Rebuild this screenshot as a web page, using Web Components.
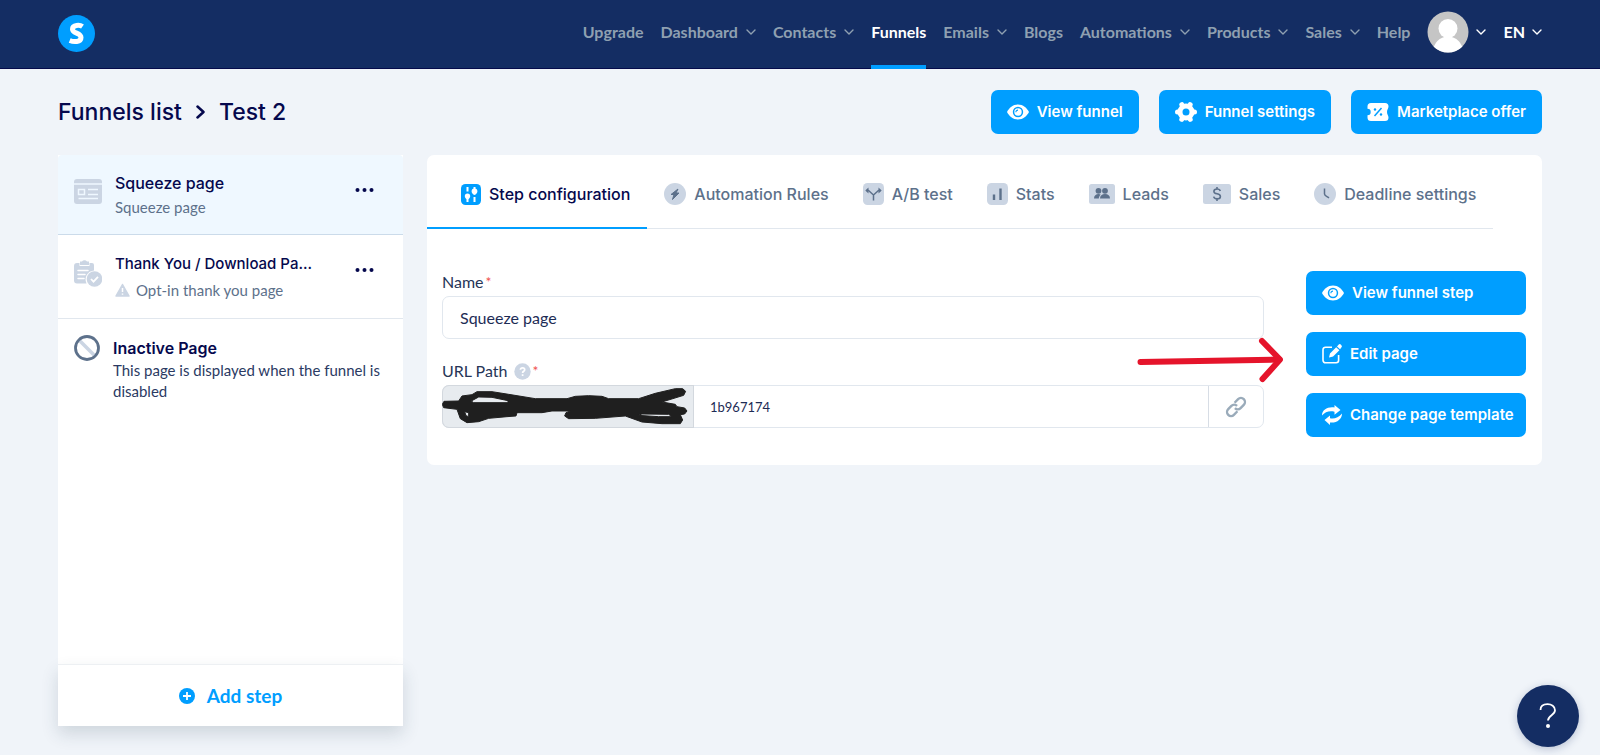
<!DOCTYPE html>
<html lang="en">
<head>
<meta charset="utf-8">
<title>Test 2 – Funnel steps</title>
<style>
  :root {
    --navy: #142d63;
    --ink: #05084d;
    --blue: #009eff;
    --slate: #5d718b;
    --icon: #cbd5e3;
    --line: #e1e7ee;
    --page: #f0f4f9;
    --body-font: Lato, "Open Sans", sans-serif;
    --title-font: Inter, "Noto Sans", sans-serif;
  }
  body { margin: 0; background: var(--page); color: var(--ink); font-family: var(--body-font); }
</style>
</head>
<body>
<funnel-app></funnel-app>
<script>
const ICONS = {
  logo: [37, 37, `<circle cx="18.5" cy="18.5" r="18.5" fill="#009eff"/><path d="M24.500 11.500C22 9.800 14.500 9.500 14.500 14.200C14.500 18.800 23 17.500 23 22.500C23 27.500 15.500 27 11.700 25.500" fill="none" stroke="#fff" stroke-width="5"/>`],
  chevron: [10, 6, `<path d="M1 1l4 4 4-4" fill="none" stroke="currentColor" stroke-width="1.4" stroke-linecap="round" stroke-linejoin="round"/>`],
  crumb: [9, 14, `<path d="M1.500 1.500l6 5.500-6 5.500" fill="none" stroke="currentColor" stroke-width="2.500" stroke-linecap="round" stroke-linejoin="round"/>`],
  avatar: [42, 42, `<clipPath id="c"><circle cx="21" cy="21" r="20.500"/></clipPath><g clip-path="url(#c)"><path fill="#c5c5c5" d="M0 0h42v42H0z"/><circle cx="21" cy="17.500" r="9.500" fill="#fff"/><ellipse cx="21" cy="41" rx="15" ry="15.500" fill="#fff"/></g>`],
  eye: [22, 16, `<path fill="currentColor" fill-rule="evenodd" d="M11 .5C16 .5 20 4 22 8c-2 4-6 7.500-11 7.500S2 12 0 8C2 4 6 .5 11 .5zM11 2.800a5.200 5.200 0 1 0 0 10.400 5.200 5.200 0 0 0 0-10.400z"/><circle cx="11" cy="8" r="3.700" fill="currentColor"/><path d="M8.900 8.200a2.100 2.100 0 0 1 2.100-2.100" fill="none" stroke="#009eff" stroke-width="1.100"/>`],
  gear: [22, 22, `<circle cx="11" cy="11" r="6" fill="none" stroke="currentColor" stroke-width="5"/><path d="M2.500 11H4M18 11h1.500M6.800 3.600l.7 1.300M14.500 17.100l.7 1.300M15.200 3.600l-.7 1.300M7.500 17.100l-.7 1.300" stroke="currentColor" stroke-width="5" stroke-linecap="round"/>`],
  ticket: [22, 18, `<path fill="currentColor" d="M4 0h14a3.500 3.500 0 0 1 3.500 3.500c0 2-1.500 3-1.500 5.500s1.500 3.500 1.500 5.500A3.500 3.500 0 0 1 18 18H4a3.500 3.500 0 0 1-3.500-3.500v-2.300a3.200 3.200 0 0 0 0-6.400V3.500A3.500 3.500 0 0 1 4 0z"/><path d="M7.500 13l7-8" stroke="#009eff" stroke-width="1.500"/><circle cx="8" cy="6.500" r="1.200" fill="#009eff"/><circle cx="14" cy="11.500" r="1.200" fill="#009eff"/>`],
  edit: [20, 20, `<path d="M10 3.200H3.500A2.500 2.500 0 0 0 1 5.700v10.600A2.500 2.500 0 0 0 3.500 18.800h10.600a2.500 2.500 0 0 0 2.500-2.500V11" fill="none" stroke="currentColor" stroke-width="1.600"/><path fill="currentColor" d="M7 13.500l1-4 6.200-6.300 3.200 3.100-6.300 6.200zM15 2.400L16.500.8a1.700 1.700 0 0 1 2.500 0l.3.400a1.700 1.700 0 0 1 0 2.400l-1.200 1.600z"/>`],
  refresh: [20, 20, `<path fill="currentColor" d="M0 10.500C0 4.500 6 1.500 12.500 2.500V0l6 5-6 4.800V6.800C7.500 5.500 3 7 0 10.500zM20 8.500c0 6-5.500 9.800-12 9V20l-5.500-5L8 10.500v2.800c4.500 1 8.500-.8 12-4.800z"/>`],
  page: [28, 25, `<rect width="28" height="25" rx="3" fill="#cbd5e3"/><path d="M0 5h28M4.500 10.500h6v5h-6zM14 10.500h10M14 15.500h10M4.500 19.500H24" fill="none" stroke="#eff8ff" stroke-width="1.500"/>`],
  clipboard: [28, 28, `<path fill="#cbd5e3" d="M3 4h2.500v3h10V4H18a2 2 0 0 1 2 2v5.500a9 9 0 0 0-7.500 13H3a3 3 0 0 1-3-3V7a3 3 0 0 1 3-3z"/><path fill="#cbd5e3" d="M6 2.500h2a3 3 0 0 1 5 0h2V6H6z"/><path d="M4 11.500h10M4 15.500h7M4 19.500h6" stroke="#fff" stroke-width="1.500" stroke-linecap="round"/><circle cx="20.500" cy="20" r="7.800" fill="#cbd5e3"/><path d="M17 20l2.500 2.600 4.500-4.800" fill="none" stroke="#fff" stroke-width="1.800"/>`],
  banned: [26, 26, `<path d="M5 5l16 16" stroke="#cbd5e3" stroke-width="3.500"/><circle cx="13" cy="13" r="11.500" fill="none" stroke="#5d718b" stroke-width="2.800"/>`],
  warn: [15, 14, `<path fill="#cbd5e3" stroke="#cbd5e3" stroke-width="1.500" stroke-linejoin="round" d="M7.500 1.500L14 13H1z"/><path d="M7.500 5v4M7.500 10.500v1.300" stroke="#fff" stroke-width="1.500"/>`],
  dots: [19, 6, `<g fill="currentColor"><circle cx="2.500" cy="3" r="2"/><circle cx="9.500" cy="3" r="2"/><circle cx="16.500" cy="3" r="2"/></g>`],
  plus: [16, 16, `<circle cx="8" cy="8" r="8" fill="currentColor"/><path d="M8 4v8M4 8h8" stroke="#fff" stroke-width="1.800"/>`],
  config: [20, 21, `<rect width="20" height="21" rx="4.500" fill="#009eff"/><path d="M6.500 3v4.500M6.500 13v5M13.500 3v5M13.500 13v5" stroke="#fff" stroke-width="2"/><path fill="#fff" d="M6.500 9.500a2.700 2.700 0 0 1 2.700 2.700c0 1.500-1.200 2.500-2.700 3.300-1.500-.8-2.700-1.800-2.700-3.300a2.700 2.700 0 0 1 2.700-2.700zM13.500 4.500a2.900 2.900 0 0 1 2.900 3c0 1.600-1.300 2.800-2.900 3.500-1.600-.7-2.900-1.900-2.900-3.500a2.900 2.900 0 0 1 2.900-3z"/>`],
  bolt: [22, 22, `<circle cx="11" cy="11" r="11" fill="#cbd5e3"/><path fill="#5d718b" stroke="#5d718b" stroke-linejoin="round" d="M14 6l-7 5.500h3l-1.500 5 6.500-6.500h-3z"/>`],
  split: [21, 22, `<rect width="21" height="22" rx="4.500" fill="#cbd5e3"/><path d="M10.500 17.500V12L5.500 7.500H3.500M10.500 12l5-4.500h2" fill="none" stroke="#5d718b" stroke-width="1.500"/><path fill="#5d718b" d="M5.500 4.500v6L2.300 7.500zM15.500 4.500v6l3.200-3z"/>`],
  stats: [21, 22, `<rect width="21" height="22" rx="4.500" fill="#cbd5e3"/><path d="M7 11.500V17M13.500 5.500V17" stroke="#5d718b" stroke-width="2.400"/>`],
  leads: [26, 20, `<rect width="26" height="20" rx="2.500" fill="#cbd5e3"/><g fill="#5d718b"><circle cx="9.500" cy="6.800" r="2.900"/><circle cx="16" cy="6.800" r="2.900"/><path d="M5 14.500c0-3 2-4.500 4.500-4.500 1 0 1.800.3 2.200.7-1.200 1-1.800 2.200-1.900 3.800zM11 14.500c0-3 2-4.500 5-4.500s5 1.500 5 4.500z"/></g>`],
  money: [28, 20, `<rect width="28" height="20" rx="2.500" fill="#cbd5e3"/><path d="M17.300 7c-.4-1.400-1.600-2-3.200-2-1.900 0-3.200.9-3.200 2.400 0 3.200 6.500 1.700 6.500 5 0 1.500-1.300 2.400-3.300 2.400-1.800 0-3.100-.8-3.400-2.200M14 3v2M14 15v2" fill="none" stroke="#5d718b" stroke-width="1.600"/>`],
  clock: [22, 22, `<circle cx="11" cy="11" r="11" fill="#cbd5e3"/><path d="M10.500 5.500V11c0 1.500 2 2.300 4.500 4" fill="none" stroke="#5d718b" stroke-width="1.500"/>`],
  help: [17, 17, `<circle cx="8.500" cy="8.500" r="8.200" fill="#cbd5e3"/><path d="M6.400 6.800c.2-2.600 4.300-2.500 4.300-.1 0 1.600-2.100 1.500-2.100 3.200M8.600 11.200v1.700" fill="none" stroke="#fff" stroke-width="1.700"/>`],
  link: [22, 22, `<g transform="rotate(-45 11 11)" fill="none" stroke="#9aabba" stroke-width="2.400"><path d="M9 15H4a4 4 0 0 1 0-8h4.500a4 4 0 0 1 4 4"/><path d="M13 7h5a4 4 0 0 1 0 8h-4.500a4 4 0 0 1-4-4"/></g>`],
  question: [18, 26, `<path d="M1.500 7C1.500 3 4.500 1.200 8.500 1.200S16 3.500 16 7.200c0 5-7 5-7 10.300" fill="none" stroke="#fff" stroke-width="1.800"/><circle cx="9" cy="23" r="2" fill="#fff"/>`],
  scribble: [248, 42, `<path transform="scale(.3333)" fill="#1f1f1f" stroke="#1f1f1f" stroke-width="3" stroke-linejoin="round" fill-rule="evenodd" d="M1 55L6 46 50 45 60 30 90 26 105 17 150 17 200 25 280 38H375L400 31 440 29 480 31 500 38H590L640 22 700 8H722L731 16 725 28 660 48 700 55 705 62 728 66 735 75 728 84 715 86 722 102 715 113H660L600 108 550 90 460 97 380 98 368 90 372 80 385 75H330L300 80 225 80 222 90 195 92 140 97 110 107 75 110 55 98 45 70 5 65zM68 77L80 80 80 92 72 89zM88 45L110 33 150 34 198 44V50H95zM588 88L600 84 680 85 690 92H650z"/>`],
  arrow: [146, 46, `<g fill="none" stroke="#e5142b" stroke-linecap="round" stroke-linejoin="round"><path stroke-width="6" d="M3.500 25L142 22.500"/><path stroke-width="6" d="M125 4l18 18.500L125.500 42"/></g>`]
};

/* Registers an element whose shadow root is cloned from a template; markup may depend on attributes. */
function define(tag, css, markup) {
  customElements.define(tag, class extends HTMLElement {
    connectedCallback() {
      if (this.shadowRoot) return;
      const t = document.createElement('template');
      t.innerHTML = `<style>*{box-sizing:border-box}${css}</style>` + (typeof markup === 'function' ? markup(this) : markup);
      this.attachShadow({ mode: 'open' }).append(t.content.cloneNode(true));
    }
  });
}
const attr = (el, name, fallback = '') => el.getAttribute(name) || fallback;

define('ui-icon', `:host{display:block;flex:none}svg{display:block}`, el => {
  const [w, h, body] = ICONS[attr(el, 'name')];
  return `<svg width="${w}" height="${h}" viewBox="0 0 ${w} ${h}" aria-hidden="true">${body}</svg>`;
});

define('nav-item', `
  :host{display:flex;height:100%;color:#8fa0b1}
  :host([active]),:host([bright]){color:#fff}
  a{display:flex;align-items:center;gap:8px;padding-bottom:6px;color:inherit;font-weight:700;font-size:16px;line-height:20px;text-decoration:none}
  :host([bright]) a{gap:7px}
  :host([active]) a{box-shadow:inset 0 -4px var(--blue)}`,
  el => `<a href="#"><slot></slot>${el.hasAttribute('menu') ? '<ui-icon name="chevron"></ui-icon>' : ''}</a>`);

define('app-header', `
  :host{display:flex;align-items:center;justify-content:space-between;height:69px;padding:0 58px;background:var(--navy);box-shadow:inset 0 -1px #050b4b}
  .logo{padding-bottom:3px}
  nav{display:flex;gap:17px;height:100%}`,
  `<a class="logo" href="#" aria-label="Home"><ui-icon name="logo"></ui-icon></a>
  <nav><nav-item>Upgrade</nav-item><nav-item menu>Dashboard</nav-item><nav-item menu>Contacts</nav-item><nav-item active>Funnels</nav-item><nav-item menu>Emails</nav-item><nav-item>Blogs</nav-item><nav-item menu>Automations</nav-item><nav-item menu>Products</nav-item><nav-item menu>Sales</nav-item><nav-item>Help</nav-item><nav-item menu bright><ui-icon name="avatar"></ui-icon></nav-item><nav-item menu bright>EN</nav-item></nav>`);

define('action-button', `
  :host{display:block}
  button{display:flex;align-items:center;gap:8px;width:100%;height:44px;padding:0 16px;border:0;border-radius:7px;background:var(--blue);color:#fff;font:600 15px/20px var(--title-font);white-space:nowrap}`,
  el => `<button type="button"><ui-icon name="${attr(el, 'icon')}"></ui-icon><slot></slot></button>`);

define('page-heading', `
  :host{display:flex;align-items:center;justify-content:space-between}
  .crumbs{display:flex;align-items:center;gap:14px;font:500 23px/30px var(--title-font)}
  a{color:inherit;text-decoration:none}
  h1{margin:0;font:inherit}
  .actions{display:flex;gap:20px}`,
  `<div class="crumbs"><a href="#">Funnels list</a><ui-icon name="crumb"></ui-icon><h1>Test 2</h1></div>
  <div class="actions"><action-button icon="eye">View funnel</action-button><action-button icon="gear">Funnel settings</action-button><action-button icon="ticket">Marketplace offer</action-button></div>`);

define('step-item', `
  :host{display:flex;align-items:flex-start;gap:13px;padding:24px 29px 0 16px;height:84px;border-bottom:1px solid var(--line)}
  :host([active]){height:80px;padding-top:18px;background:#eff8ff;border-color:#cbdbea;border-radius:4px 4px 0 0}
  :host([inactive]){padding:16px 0 0 16px;border:0;height:auto}
  :host([active]) .mark{padding-top:6px}
  .text{flex:1;min-width:0}
  ::slotted([slot=title]){display:block;font:500 15px/20px var(--title-font);margin-top:-5px;white-space:nowrap}
  :host([active]) ::slotted([slot=title]){font-size:16px;margin-top:0}
  :host([inactive]) ::slotted([slot=title]){font:600 16px/24px var(--title-font);margin-top:1px}
  .sub{display:flex;align-items:center;gap:6px;margin-top:6px;font-size:15px;line-height:20px;color:var(--slate)}
  :host([active]) .sub{margin-top:4px}
  :host([inactive]) .sub{margin:0;line-height:21px;color:#2b3a63}
  button{border:0;background:none;padding:8px 0;color:var(--ink)}
  :host([active]) button{padding-top:14px}`,
  el => `<ui-icon class="mark" name="${attr(el, 'icon')}"></ui-icon><div class="text"><slot name="title"></slot><div class="sub">${el.hasAttribute('warn') ? '<ui-icon name="warn"></ui-icon>' : ''}<slot></slot></div></div>${el.hasAttribute('inactive') ? '' : '<button type="button" aria-label="Step options"><ui-icon name="dots"></ui-icon></button>'}`);

define('step-list', `
  :host{display:flex;flex-direction:column;background:#fff}
  .add{display:flex;align-items:center;justify-content:center;gap:12px;height:62px;margin-top:auto;border:0;border-top:1px solid #edf0f3;background:#fff;color:var(--blue);font:700 19px/24px var(--body-font);box-shadow:0 8px 16px rgba(40,60,80,.16)}`,
  `<step-item active icon="page"><span slot="title">Squeeze page</span>Squeeze page</step-item>
  <step-item warn icon="clipboard"><span slot="title">Thank You / Download Pa...</span>Opt-in thank you page</step-item>
  <step-item inactive icon="banned"><span slot="title">Inactive Page</span>This page is displayed when the funnel is disabled</step-item>
  <button class="add" type="button"><ui-icon name="plus"></ui-icon>Add step</button>`);

define('tab-item', `
  :host{display:block;color:var(--slate)}
  :host([active]){color:var(--ink)}
  a{display:flex;align-items:center;gap:8px;height:74px;padding:4px 17px 0;color:inherit;text-decoration:none;font:500 16px/24px var(--title-font);white-space:nowrap}
  :host([active]) a{padding-left:34px;box-shadow:inset 0 -2px var(--blue)}`,
  el => `<a href="#"><ui-icon name="${attr(el, 'icon')}"></ui-icon><slot></slot></a>`);

define('step-form', `
  :host{display:block}
  label,.label{display:flex;align-items:center;gap:6px;height:24px;font-size:16px;line-height:20px;color:#263557}
  label,.label{padding-bottom:4px}
  .label label{padding:0}
  .req{align-self:flex-start;color:#ef5350;font-size:14px;line-height:20px;margin-left:-4px}
  input{min-width:0;width:100%;height:43px;padding:0 17px;border:1px solid var(--line);border-radius:7px;background:#fff;color:#1d2c55;font:16px/20px var(--body-font);outline:0}
  .group{display:flex;height:43px;border:1px solid var(--line);border-radius:7px}
  .prefix{position:relative;flex:none;width:250px;border-radius:6px 0 0 6px;background:#e7ebef;box-shadow:0 0 0 1px #d3d8de}
  .prefix ui-icon{position:absolute;left:-1px;top:0}
  .group input{flex:1;height:100%;border:0;font-size:13px}
  .group button{display:grid;place-items:center;width:55px;flex:none;border:0;border-left:1px solid #d7dde5;background:none;padding:0}
  .name{margin-bottom:22px}`,
  `<div class="name"><label for="name">Name<span class="req">*</span></label><input id="name" value="Squeeze page"></div>
  <div><div class="label"><label for="path">URL Path</label><ui-icon name="help"></ui-icon><span class="req">*</span></div>
  <div class="group"><div class="prefix"><ui-icon name="scribble"></ui-icon></div><input id="path" value="1b967174"><button type="button" aria-label="Copy link"><ui-icon name="link"></ui-icon></button></div></div>`);

define('step-panel', `
  :host{display:block;background:#fff;border-radius:7px;padding-bottom:28px}
  .tabs{display:flex;width:fit-content;box-shadow:inset 0 -1px var(--line)}
  .body{display:flex;gap:42px;padding:42px 16px 0 15px}
  step-form{flex:1;margin-top:1px}
  .side{position:relative;width:220px;display:grid;grid-template-columns:minmax(0,1fr);gap:17px;align-content:start}
  .arrow{position:absolute;right:calc(100% + 23px);top:66px}`,
  `<div class="tabs"><tab-item active icon="config">Step configuration</tab-item><tab-item icon="bolt">Automation Rules</tab-item><tab-item icon="split">A/B test</tab-item><tab-item icon="stats">Stats</tab-item><tab-item icon="leads">Leads</tab-item><tab-item icon="money">Sales</tab-item><tab-item icon="clock">Deadline settings</tab-item></div>
  <div class="body"><step-form></step-form><div class="side"><action-button icon="eye">View funnel step</action-button><action-button icon="edit">Edit page</action-button><action-button icon="refresh">Change page template</action-button><ui-icon class="arrow" name="arrow"></ui-icon></div></div>`);

define('help-button', `
  :host{position:fixed;right:21px;bottom:8px}
  button{display:grid;place-items:center;width:62px;height:62px;border:0;border-radius:50%;background:var(--navy);box-shadow:0 2px 8px rgba(20,45,99,.25)}`,
  `<button type="button" aria-label="Help"><ui-icon name="question"></ui-icon></button>`);

define('funnel-app', `
  :host{display:flex;flex-direction:column;min-height:100vh}
  main{flex:1;display:flex;flex-direction:column;gap:21px;padding:21px 58px 29px}
  .columns{flex:1;display:grid;grid-template-columns:345px minmax(0,1fr);gap:24px}
  step-panel{align-self:start}`,
  `<app-header></app-header><main><page-heading></page-heading><div class="columns"><step-list></step-list><step-panel></step-panel></div></main><help-button></help-button>`);
</script>
</body>
</html>
